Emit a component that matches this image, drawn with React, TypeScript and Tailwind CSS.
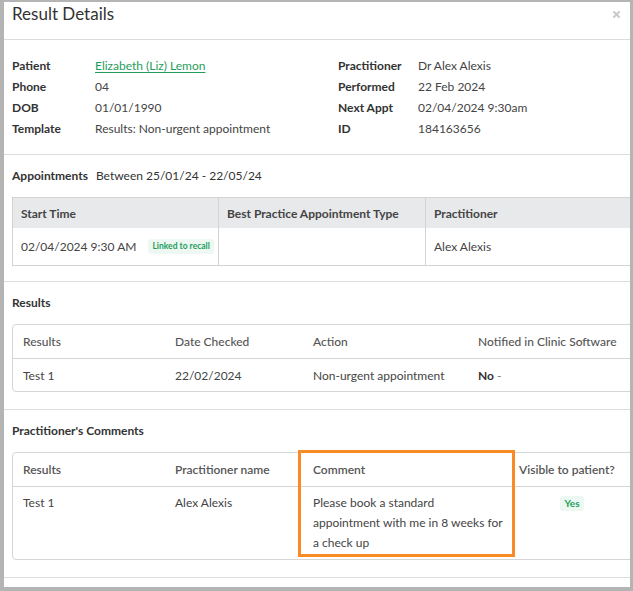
import React from "react";

export default function App() {
  const leftRows: [string, React.ReactNode][] = [
    ["Patient", <a className="text-[#1f9d5c] underline underline-offset-2 decoration-1">Elizabeth (Liz) Lemon</a>],
    ["Phone", "04"],
    ["DOB", "01/01/1990"],
    ["Template", "Results: Non-urgent appointment"],
  ];
  const rightRows: [string, React.ReactNode][] = [
    ["Practitioner", "Dr Alex Alexis"],
    ["Performed", "22 Feb 2024"],
    ["Next Appt", "02/04/2024 9:30am"],
    ["ID", "184163656"],
  ];
  return (
    <div className="w-[633px] h-[591px] bg-[#b4b4b4] pt-[2px] pl-[4px] overflow-hidden font-['Lato',sans-serif] text-[12px] leading-[21px] text-[#444]">
      <div className="relative w-[626px] h-[585px] bg-white overflow-hidden">
        <div className="w-[680px]">
          {/* header */}
          <div className="h-[38px] border-b border-[#dcdcdc] pl-[8px] pt-[2px]">
            <div className="text-[17px] leading-[20px] text-[#333]">Result Details</div>
          </div>

          {/* info */}
          <div className="flex border-b border-[#dcdcdc] pl-[8px] pt-[15px] pb-[15px]">
            <div className="w-[326px]">
              {leftRows.map(([l, v]) => (
                <div key={l} className="flex h-[21px]">
                  <div className="w-[83px] font-bold text-[#333]">{l}</div>
                  <div>{v}</div>
                </div>
              ))}
            </div>
            <div>
              {rightRows.map(([l, v]) => (
                <div key={l} className="flex h-[21px]">
                  <div className="w-[80px] font-bold text-[#333]">{l}</div>
                  <div>{v}</div>
                </div>
              ))}
            </div>
          </div>

          {/* appointments */}
          <div className="border-b border-[#dcdcdc] pl-[8px] pt-[10px] pb-[15px]">
            <div className="mb-[11px] text-[#333]">
              <span className="font-bold">Appointments</span>
              <span className="ml-[8px]">Between 25/01/24 - 22/05/24</span>
            </div>
            <div className="w-[640px] border border-[#d3d3d3]">
              <div className="flex h-[30px] bg-[#e8e9eb] font-bold text-[#444]">
                <div className="w-[206px] border-r border-[#d3d3d3] px-[8px] flex items-center">Start Time</div>
                <div className="w-[207px] border-r border-[#d3d3d3] px-[8px] flex items-center">Best Practice Appointment Type</div>
                <div className="flex-1 px-[8px] flex items-center">Practitioner</div>
              </div>
              <div className="flex h-[37px]">
                <div className="w-[206px] border-r border-[#d3d3d3] px-[8px] flex items-center whitespace-nowrap">
                  <span>02/04/2024 9:30 AM</span>
                  <span className="ml-[12px] h-[15px] px-[4px] rounded-[3px] bg-[#edf8f2] text-[#1f9d5c] font-bold text-[8.5px] leading-[15px]">Linked to recall</span>
                </div>
                <div className="w-[207px] border-r border-[#d3d3d3]"></div>
                <div className="flex-1 px-[8px] flex items-center">Alex Alexis</div>
              </div>
            </div>
          </div>

          {/* results */}
          <div className="border-b border-[#dcdcdc] pl-[8px] pt-[10px] pb-[17px]">
            <div className="mb-[11px] font-bold text-[#333]">Results</div>
            <div className="w-[660px] border border-[#d6d6d6] rounded-[4px]">
              <div className="flex h-[34px] items-center border-b border-[#d6d6d6] font-medium text-[#555]">
                <div className="w-[152px] px-[10px]">Results</div>
                <div className="w-[138px] px-[10px]">Date Checked</div>
                <div className="w-[165px] px-[10px]">Action</div>
                <div className="flex-1 px-[10px]">Notified in Clinic Software</div>
              </div>
              <div className="flex h-[32px] items-center">
                <div className="w-[152px] px-[10px]">Test 1</div>
                <div className="w-[138px] px-[10px]">22/02/2024</div>
                <div className="w-[165px] px-[10px]">Non-urgent appointment</div>
                <div className="flex-1 px-[10px]">
                  <span className="font-bold text-[#333]">No</span>
                  <span className="text-[#777]"> -</span>
                </div>
              </div>
            </div>
          </div>

          {/* comments */}
          <div className="border-b border-[#dcdcdc] pl-[8px] pt-[10px] pb-[17px]">
            <div className="mb-[11px] font-bold text-[#333]">Practitioner's Comments</div>
            <div className="w-[660px] border border-[#d6d6d6] rounded-[4px]">
              <div className="flex h-[34px] items-center border-b border-[#d6d6d6] font-semibold text-[#555]">
                <div className="w-[152px] px-[10px]">Results</div>
                <div className="w-[138px] px-[10px]">Practitioner name</div>
                <div className="w-[206px] px-[10px]">Comment</div>
                <div className="w-[126px] px-[10px]">Visible to patient?</div>
              </div>
              <div className="flex py-[6px] leading-[20px]">
                <div className="w-[152px] px-[10px]">Test 1</div>
                <div className="w-[138px] px-[10px]">Alex Alexis</div>
                <div className="w-[206px] px-[10px]">
                  <div>Please book a standard</div>
                  <div className="whitespace-nowrap">appointment with me in 8 weeks for</div>
                  <div>a check up</div>
                </div>
                <div className="w-[126px] flex justify-center">
                  <span className="mt-[3px] h-[15px] px-[4px] rounded-[3px] bg-[#edf8f2] text-[#1f9d5c] font-bold text-[10px] leading-[15px]">Yes</span>
                </div>
              </div>
            </div>
          </div>
          <div className="h-[10px]"></div>
        </div>

        {/* close */}
        <svg className="absolute top-[9px] right-[10px]" width="7" height="7" viewBox="0 0 7 7">
          <path d="M1 1L6 6M6 1L1 6" stroke="#c9c9c9" strokeWidth="2" strokeLinecap="square" />
        </svg>

        {/* orange highlight */}
        <div className="absolute left-[294px] top-[448px] w-[217px] h-[107px] border-[3px] border-[#f98a26]"></div>
      </div>
    </div>
  );
}
